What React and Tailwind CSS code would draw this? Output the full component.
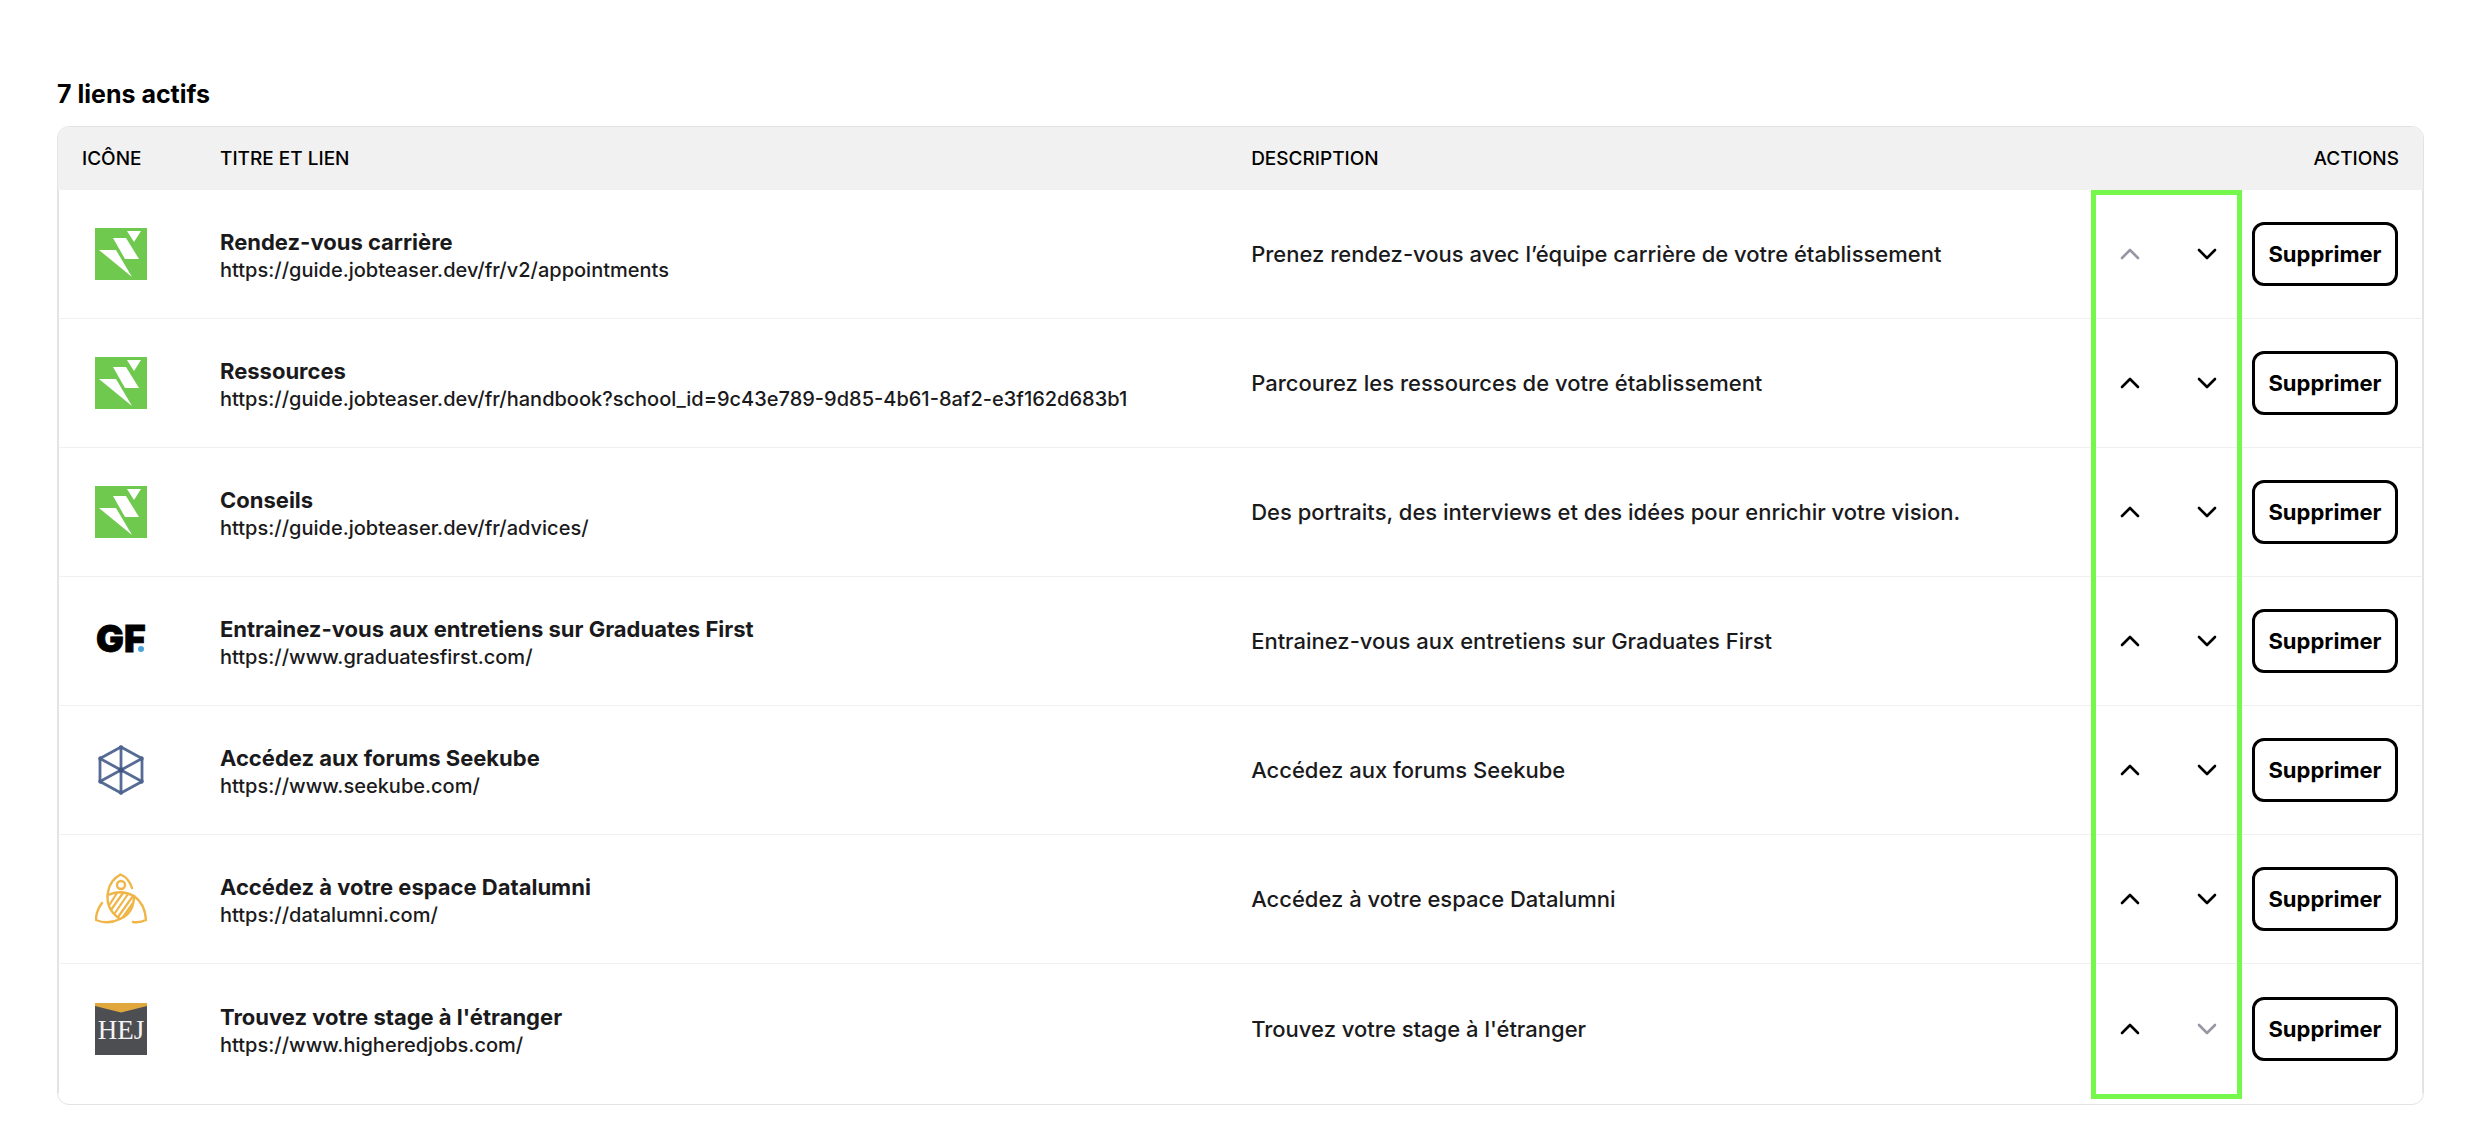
import React from "react";

function JobteaserIcon() {
  return (
    <svg viewBox="0 0 52 52" className="size-13 shrink-0" role="img" aria-label="JobTeaser">
      <rect width="52" height="52" fill="#70c94f" />
      <path d="M32 3H46L39 14Z" fill="#fff" />
      <path d="M18 10H31L44 31H30Z" fill="#fff" />
      <path d="M4 22H21L37 49Z" fill="#fff" />
    </svg>
  );
}

function GraduatesFirstIcon() {
  return (
    <svg viewBox="0 0 52 52" className="size-13 shrink-0" role="img" aria-label="Graduates First">
      <text x="1" y="37" fontFamily="Inter, sans-serif" fontWeight="900" fontSize="37" fill="#000" stroke="#000" strokeWidth="0.8">
        G
      </text>
      <text x="29" y="37" fontFamily="Inter, sans-serif" fontWeight="900" fontSize="37" fill="#000" stroke="#000" strokeWidth="0.8">
        F
      </text>
      <circle cx="46" cy="34" r="3" fill="#4ba3dc" />
    </svg>
  );
}

function SeekubeIcon() {
  return (
    <svg
      viewBox="0 0 52 52"
      className="size-13 shrink-0"
      role="img"
      aria-label="Seekube"
      fill="none"
      stroke="#566b95"
      strokeWidth="2.8"
      strokeLinejoin="round"
    >
      <path d="M26 3L47 14.500V37.500L26 49L5 37.500V14.500Z" />
      <path d="M26 3V49M5 14.500L47 37.500M47 14.500L5 37.500" />
      <circle cx="26" cy="26" r="2.600" fill="#3d5380" stroke="none" />
      <g fill="#4f6590" stroke="none">
        <circle cx="26" cy="3.500" r="2.200" />
        <circle cx="46.500" cy="14.500" r="2.200" />
        <circle cx="46.500" cy="37.500" r="2.200" />
        <circle cx="26" cy="48.500" r="2.200" />
        <circle cx="5.500" cy="37.500" r="2.200" />
        <circle cx="5.500" cy="14.500" r="2.200" />
      </g>
    </svg>
  );
}

function DatalumniIcon() {
  return (
    <svg
      viewBox="0 0 52 52"
      className="size-13 shrink-0"
      role="img"
      aria-label="Datalumni"
      fill="none"
      stroke="#f0b547"
      strokeWidth="2.4"
      strokeLinecap="round"
    >
      <path d="M37 15Q34 5 25.500 1.500Q15 7 13 19Q10 36 25 46Q39 40 39 23Q26 16 13 22" />
      <circle cx="26" cy="12" r="4" />
      <path d="M7 30Q1 38 1 47Q13 52 25 46" />
      <path d="M39 23Q50 31 51 47Q45 50 38 49" />
      <path d="M15 31L22 20M16 37L28 20M20 40L33 21M23 44L38 23M28 44L38 30" strokeWidth="2.2" />
    </svg>
  );
}

function HigherEdJobsIcon() {
  return (
    <svg viewBox="0 0 52 52" className="size-13 shrink-0" role="img" aria-label="HEJ">
      <rect width="52" height="52" fill="#4d4e52" />
      <path d="M0 0H52V3L26 9.500L0 3Z" fill="#e0a73c" />
      <text x="26" y="36" textAnchor="middle" fontFamily="'Liberation Serif', serif" fontSize="27" fill="#f4f4f4">
        HEJ
      </text>
    </svg>
  );
}

function Chevron({ direction }) {
  return (
    <svg
      viewBox="0 0 24 24"
      className="size-6"
      fill="none"
      stroke="currentColor"
      strokeWidth="2.6"
      strokeLinecap="round"
      strokeLinejoin="round"
      aria-hidden="true"
    >
      <path d={direction === "up" ? "M4 16L12 8L20 16" : "M4 8L12 16L20 8"} />
    </svg>
  );
}

function MoveButton({ direction, disabled, label }) {
  return (
    <button
      type="button"
      aria-label={label}
      disabled={disabled}
      className="flex size-16 items-center justify-center text-black disabled:text-[#9896a3]"
    >
      <Chevron direction={direction} />
    </button>
  );
}

const links = [
  {
    Icon: JobteaserIcon,
    title: "Rendez-vous carrière",
    url: "https://guide.jobteaser.dev/fr/v2/appointments",
    description: "Prenez rendez-vous avec l’équipe carrière de votre établissement",
  },
  {
    Icon: JobteaserIcon,
    title: "Ressources",
    url: "https://guide.jobteaser.dev/fr/handbook?school_id=9c43e789-9d85-4b61-8af2-e3f162d683b1",
    description: "Parcourez les ressources de votre établissement",
  },
  {
    Icon: JobteaserIcon,
    title: "Conseils",
    url: "https://guide.jobteaser.dev/fr/advices/",
    description: "Des portraits, des interviews et des idées pour enrichir votre vision.",
  },
  {
    Icon: GraduatesFirstIcon,
    title: "Entrainez-vous aux entretiens sur Graduates First",
    url: "https://www.graduatesfirst.com/",
    description: "Entrainez-vous aux entretiens sur Graduates First",
  },
  {
    Icon: SeekubeIcon,
    title: "Accédez aux forums Seekube",
    url: "https://www.seekube.com/",
    description: "Accédez aux forums Seekube",
  },
  {
    Icon: DatalumniIcon,
    title: "Accédez à votre espace Datalumni",
    url: "https://datalumni.com/",
    description: "Accédez à votre espace Datalumni",
  },
  {
    Icon: HigherEdJobsIcon,
    title: "Trouvez votre stage à l'étranger",
    url: "https://www.higheredjobs.com/",
    description: "Trouvez votre stage à l'étranger",
  },
];

function LinkRow({ link, first, last }) {
  const { Icon, title, url, description } = link;
  return (
    <tr>
      <td className="h-[129px] border-l border-l-[#e3e3e3] pl-9">
        <Icon />
      </td>
      <td className="px-6 pt-1">
        <div className="text-[22px] leading-7 font-bold">{title}</div>
        <a href={url} className="block text-xl leading-7 font-medium">
          {url}
        </a>
      </td>
      <td className="px-6 text-[22px] leading-8 font-medium">{description}</td>
      <td className="border-r border-r-[#e3e3e3] pr-6">
        <div className="flex items-center justify-end gap-[13px]">
          <MoveButton direction="up" disabled={first} label={`Monter ${title}`} />
          <MoveButton direction="down" disabled={last} label={`Descendre ${title}`} />
          <button
            type="button"
            className="h-16 w-[146px] rounded-xl border-3 border-black text-[22px] leading-8 font-bold text-black"
          >
            Supprimer
          </button>
        </div>
      </td>
    </tr>
  );
}

export default function App() {
  return (
    <main className="bg-white pt-[78px] pr-11 pb-9 pl-[57px] font-['Inter',sans-serif] text-[#1a1a1c]">
      <h2 className="mb-4 text-[25px] leading-8 font-bold text-black">7 liens actifs</h2>
      <div className="relative rounded-xl border border-[#e3e3e3] pb-[11px]">
        <table className="w-full table-fixed border-separate border-spacing-0 [&_tbody_tr:not(:last-child)_td]:border-b [&_tbody_td]:border-b-[#f0f0f0]">
          <thead>
            <tr className="text-left text-[19px] leading-7 text-black [&>th]:h-[63px] [&>th]:bg-[#f1f1f1] [&>th]:px-6 [&>th]:font-medium">
              <th scope="col" className="w-[138px] rounded-tl-xl">ICÔNE</th>
              <th scope="col" className="w-[43.6%]">TITRE ET LIEN</th>
              <th scope="col">DESCRIPTION</th>
              <th scope="col" className="w-[372px] rounded-tr-xl text-right">ACTIONS</th>
            </tr>
          </thead>
          <tbody>
            {links.map((link, index) => (
              <LinkRow key={link.title} link={link} first={index === 0} last={index === links.length - 1} />
            ))}
          </tbody>
        </table>
        <div className="pointer-events-none absolute top-[63px] right-[181px] bottom-[5px] w-[151px] border-5 border-[#75f84b]" />
      </div>
    </main>
  );
}
